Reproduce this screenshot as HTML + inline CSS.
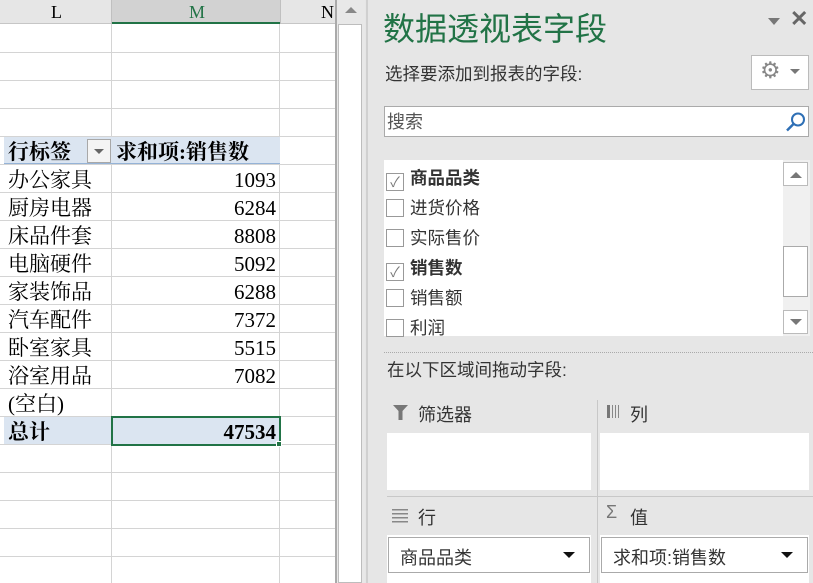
<!DOCTYPE html><html><head><meta charset="utf-8"><style>
*{margin:0;padding:0;box-sizing:border-box}
body{width:813px;height:583px;overflow:hidden;background:#e6e6e6;position:relative;font-family:"Liberation Serif","Noto Serif CJK SC",serif}
.a{position:absolute}
.sheet{left:0;top:0;width:336px;height:583px;background:#fff}
.hl{height:1px;background:#d4d4d4;left:0;width:336px}
.vl{width:1px;background:#d4d4d4;top:24px;height:559px}
.cell{position:absolute;font-size:21px;line-height:28px;color:#000;white-space:nowrap}
.n{right:537px;text-align:right}
.s{font-family:"Liberation Sans","Noto Sans CJK SC",sans-serif}
</style></head><body>
<div class="a sheet"></div>
<div class="a" style="left:0;top:0;width:336px;height:24px;background:#e6e6e6;border-bottom:1px solid #c6c6c6"></div>
<div class="a" style="left:112px;top:0;width:168px;height:24px;background:#d2d2d2;border-bottom:2px solid #217346"></div>
<div class="a" style="left:111px;top:0;width:1px;height:24px;background:#c0c0c0"></div>
<div class="a" style="left:280px;top:0;width:1px;height:24px;background:#c0c0c0"></div>
<div class="cell" style="left:51px;top:-2px;font-size:18px">L</div>
<div class="cell" style="left:189px;top:-2px;font-size:18px;color:#217346">M</div>
<div class="cell" style="left:321px;top:-2px;font-size:18px">N</div>
<div class="a vl" style="left:111px"></div><div class="a vl" style="left:279px"></div>
<div class="a hl" style="top:52px"></div><div class="a hl" style="top:80px"></div><div class="a hl" style="top:108px"></div><div class="a hl" style="top:136px"></div>
<div class="a hl" style="top:164px"></div><div class="a hl" style="top:192px"></div><div class="a hl" style="top:220px"></div><div class="a hl" style="top:248px"></div><div class="a hl" style="top:276px"></div><div class="a hl" style="top:304px"></div><div class="a hl" style="top:332px"></div><div class="a hl" style="top:360px"></div><div class="a hl" style="top:388px"></div><div class="a hl" style="top:416px"></div><div class="a hl" style="top:444px"></div><div class="a hl" style="top:472px"></div><div class="a hl" style="top:500px"></div><div class="a hl" style="top:528px"></div><div class="a hl" style="top:556px"></div>
<div class="a" style="left:4px;top:137px;width:276px;height:27px;background:#dbe5f1;border-bottom:1px solid #95b3d7"></div>
<div class="a" style="left:4px;top:417px;width:276px;height:27px;background:#dbe5f1"></div>
<div class="a" style="left:87px;top:139px;width:24px;height:24px;background:#f4f4f4;border:1px solid #a8a8a8"></div>
<div class="a" style="left:94px;top:149px;border-left:5px solid transparent;border-right:5px solid transparent;border-top:5px solid #666"></div>
<div class="cell" style="left:8px;top:138px;font-weight:bold">行标签</div>
<div class="cell" style="left:116px;top:138px;font-weight:bold">求和项:销售数</div>
<div class="cell" style="left:8px;top:166px">办公家具</div><div class="cell n" style="top:166px">1093</div>
<div class="cell" style="left:8px;top:194px">厨房电器</div><div class="cell n" style="top:194px">6284</div>
<div class="cell" style="left:8px;top:222px">床品件套</div><div class="cell n" style="top:222px">8808</div>
<div class="cell" style="left:8px;top:250px">电脑硬件</div><div class="cell n" style="top:250px">5092</div>
<div class="cell" style="left:8px;top:278px">家装饰品</div><div class="cell n" style="top:278px">6288</div>
<div class="cell" style="left:8px;top:306px">汽车配件</div><div class="cell n" style="top:306px">7372</div>
<div class="cell" style="left:8px;top:334px">卧室家具</div><div class="cell n" style="top:334px">5515</div>
<div class="cell" style="left:8px;top:362px">浴室用品</div><div class="cell n" style="top:362px">7082</div>
<div class="cell" style="left:8px;top:390px">(空白)</div>
<div class="cell" style="left:8px;top:418px;font-weight:bold">总计</div>
<div class="a" style="left:111px;top:416px;width:170px;height:30px;border:2px solid #217346"></div>
<div class="cell n" style="top:418px;font-weight:bold">47534</div>
<div class="a" style="left:276px;top:441px;width:6px;height:6px;background:#217346;border:1px solid #fff"></div>
<div class="a" style="left:335px;top:0;width:2px;height:583px;background:#aaa"></div>
<div class="a" style="left:337px;top:0;width:28px;height:583px;background:#e8e8e8"></div>
<div class="a" style="left:338px;top:24px;width:24px;height:559px;background:#fff;border:1px solid #bdbdbd"></div>
<div class="a" style="left:345px;top:7px;border-left:6px solid transparent;border-right:6px solid transparent;border-bottom:6px solid #888"></div>
<div class="a" style="left:366px;top:0;width:2px;height:583px;background:#d0d0d0"></div>
<div class="a s" style="left:383px;top:9px;font-size:32px;color:#217346;line-height:40px">数据透视表字段</div>
<div class="a" style="left:768px;top:18px;border-left:6px solid transparent;border-right:6px solid transparent;border-top:7px solid #777"></div>
<div class="a s" style="left:790px;top:6px;font-size:22px;color:#666;font-weight:bold">✕</div>
<div class="a s" style="left:385px;top:61px;font-size:17.5px;color:#333">选择要添加到报表的字段:</div>
<div class="a" style="left:751px;top:55px;width:58px;height:35px;background:#fff;border:1px solid #bbb"></div>
<div class="a s" style="left:760px;top:57px;font-size:23px;color:#888">⚙</div>
<div class="a" style="left:790px;top:69px;border-left:5px solid transparent;border-right:5px solid transparent;border-top:5px solid #777"></div>
<div class="a" style="left:384px;top:106px;width:425px;height:31px;background:#fff;border:1px solid #aaa"></div>
<div class="a s" style="left:387px;top:108px;font-size:18px;color:#555">搜索</div>
<svg class="a" style="left:785px;top:111px" width="22" height="22"><circle cx="13" cy="8.5" r="6" fill="none" stroke="#2e6fb5" stroke-width="2"/><line x1="8.5" y1="13" x2="2" y2="19.5" stroke="#2e6fb5" stroke-width="2.5"/></svg>
<div class="a" style="left:384px;top:160px;width:426px;height:176px;background:#fff"></div>
<div class="a" style="left:783px;top:160px;width:27px;height:176px;background:#f0f0f0"></div>
<div class="a" style="left:783px;top:162px;width:25px;height:24px;background:#fff;border:1px solid #bbb"></div>
<div class="a" style="left:790px;top:172px;border-left:6px solid transparent;border-right:6px solid transparent;border-bottom:6px solid #777"></div>
<div class="a" style="left:783px;top:246px;width:25px;height:51px;background:#fff;border:1px solid #aaa"></div>
<div class="a" style="left:783px;top:310px;width:25px;height:24px;background:#fff;border:1px solid #bbb"></div>
<div class="a" style="left:790px;top:319px;border-left:6px solid transparent;border-right:6px solid transparent;border-top:6px solid #777"></div>
<div class="a s" style="left:386px;top:163px;font-size:17.5px;line-height:30px;color:#333">
<div><span style="display:inline-block;width:18px;height:18px;border:1px solid #999;vertical-align:-3px;margin-right:6px;font-size:14px;line-height:16px;text-align:center;color:#777">✓</span><b>商品品类</b></div>
<div><span style="display:inline-block;width:18px;height:18px;border:1px solid #999;vertical-align:-3px;margin-right:6px"></span>进货价格</div>
<div><span style="display:inline-block;width:18px;height:18px;border:1px solid #999;vertical-align:-3px;margin-right:6px"></span>实际售价</div>
<div><span style="display:inline-block;width:18px;height:18px;border:1px solid #999;vertical-align:-3px;margin-right:6px;font-size:14px;line-height:16px;text-align:center;color:#777">✓</span><b>销售数</b></div>
<div><span style="display:inline-block;width:18px;height:18px;border:1px solid #999;vertical-align:-3px;margin-right:6px"></span>销售额</div>
<div><span style="display:inline-block;width:18px;height:18px;border:1px solid #999;vertical-align:-3px;margin-right:6px"></span>利润</div>
</div>
<div class="a" style="left:384px;top:352px;width:429px;border-top:1px dotted #aaa"></div>
<div class="a s" style="left:387px;top:357px;font-size:17.5px;color:#333">在以下区域间拖动字段:</div>
<svg class="a" style="left:392px;top:404px" width="18" height="18"><path d="M1 1H16L10.5 7V16H6.5V7Z" fill="#777"/></svg>
<div class="a s" style="left:418px;top:401px;font-size:18px;color:#333">筛选器</div>
<svg class="a" style="left:607px;top:405px" width="16" height="14"><rect x="0" y="0" width="3" height="13" fill="#777"/><rect x="5" y="0" width="1" height="13" fill="#888"/><rect x="8" y="0" width="1" height="13" fill="#888"/><rect x="11" y="0" width="1" height="13" fill="#888"/></svg>
<div class="a s" style="left:630px;top:401px;font-size:18px;color:#333">列</div>
<div class="a" style="left:387px;top:433px;width:204px;height:57px;background:#fff"></div>
<div class="a" style="left:600px;top:433px;width:209px;height:57px;background:#fff"></div>
<div class="a" style="left:597px;top:400px;width:1px;height:183px;background:#c8c8c8"></div>
<div class="a" style="left:387px;top:496px;width:426px;height:1px;background:#c8c8c8"></div>
<svg class="a" style="left:392px;top:509px" width="18" height="14"><rect y="0" width="16" height="1.5" fill="#888"/><rect y="4" width="16" height="1.5" fill="#888"/><rect y="8" width="16" height="1.5" fill="#888"/><rect y="12" width="16" height="1.5" fill="#888"/></svg>
<div class="a s" style="left:418px;top:504px;font-size:18px;color:#333">行</div>
<div class="a s" style="left:606px;top:502px;font-size:18px;color:#777">Σ</div>
<div class="a s" style="left:630px;top:504px;font-size:18px;color:#333">值</div>
<div class="a" style="left:387px;top:535px;width:204px;height:48px;background:#fff"></div>
<div class="a" style="left:600px;top:535px;width:209px;height:48px;background:#fff"></div>
<div class="a" style="left:388px;top:537px;width:202px;height:36px;border:1px solid #aaa;background:#fff"></div>
<div class="a s" style="left:400px;top:544px;font-size:18px;color:#333">商品品类</div>
<div class="a" style="left:563px;top:552px;border-left:6px solid transparent;border-right:6px solid transparent;border-top:6px solid #111"></div>
<div class="a" style="left:601px;top:537px;width:207px;height:36px;border:1px solid #aaa;background:#fff"></div>
<div class="a s" style="left:613px;top:544px;font-size:18px;color:#333">求和项:销售数</div>
<div class="a" style="left:781px;top:552px;border-left:6px solid transparent;border-right:6px solid transparent;border-top:6px solid #111"></div>
</body></html>
